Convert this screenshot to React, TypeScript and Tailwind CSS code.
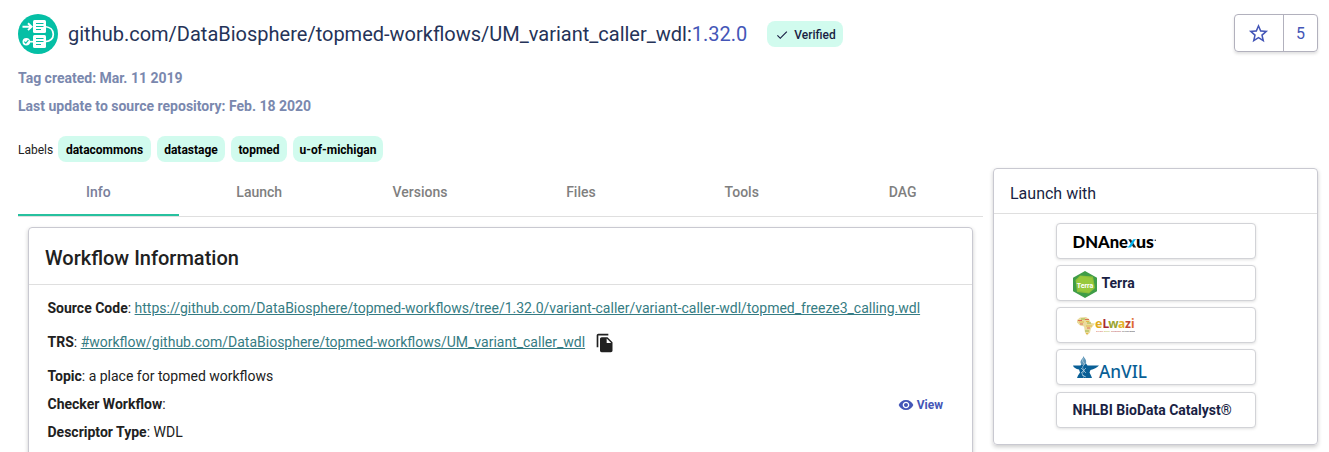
import type { ReactNode } from 'react';
import { MdCheck, MdFileCopy, MdRemoveRedEye, MdStarBorder } from 'react-icons/md';

const labels = [
  { name: 'datacommons', width: 'w-[93px]' },
  { name: 'datastage', width: 'w-[68px]' },
  { name: 'topmed', width: 'w-14' },
  { name: 'u-of-michigan', width: 'w-[90px]' },
];
const tabs = ['Info', 'Launch', 'Versions', 'Files', 'Tools', 'DAG'];

function WorkflowLogo() {
  return (
    <svg className="size-10 shrink-0" viewBox="0 0 40 40" fill="none">
      <circle cx="20" cy="20" r="20" fill="#05bfa5" />
      <path d="M27 12.500C32 13 35.300 16 35.300 20.300S32 27.300 27 27.700" stroke="#fff" strokeWidth="1.700" />
      <path d="M4.500 12.700H13.500M10 9.300 13.600 12.700 10 16.100" stroke="#fff" strokeWidth="1.900" />
      <rect x="15" y="6" width="13" height="13" rx="1.500" fill="#fff" />
      <rect x="15" y="21" width="13" height="13" rx="1.500" fill="#fff" />
      <path d="M18 9.500h7.500M18 12.500h7.500M18 15.500h5M18 24.500h7.500M18 27.500h7.500M18 30.500h5" stroke="#05bfa5" strokeWidth="1.100" />
      <path d="M11 27.700h4" stroke="#fff" strokeWidth="1.700" />
      <circle cx="8.300" cy="27.700" r="3.800" fill="#fff" />
      <path d="m6.300 27.700 1.500 1.500 2.600-3" stroke="#05bfa5" strokeWidth="1.100" />
    </svg>
  );
}

function DnaNexusLogo() {
  return (
    <svg className="mt-0.5 h-5 w-[90px]" viewBox="0 0 90 20">
      <g fontFamily="Lato, sans-serif" fontWeight="900" fontSize="16">
        <text x="-0.500" y="15.500" textLength="55.500" lengthAdjust="spacingAndGlyphs">DNAne</text>
        <text x="63" y="15.500" textLength="18" lengthAdjust="spacingAndGlyphs">us</text>
      </g>
      <path d="M55.200 7.300h2.700l5.300 8.200h-2.800z" fill="#222" />
      <path d="M63.300 7.300h-2.700c-2.500 1.500-3.200 6.500-6.300 8.200h3.200c2.500-1.500 3-6.500 5.800-8.200z" fill="#00b5f0" />
      <circle cx="82.300" cy="8.200" r="0.800" fill="#333" />
    </svg>
  );
}

function TerraLogo() {
  return (
    <svg className="h-[27px] w-6" viewBox="0 0 24 27">
      <path d="M12 0 24 6.700v13.500L12 27 0 20.200V6.700z" fill="#3f9d48" />
      <path d="m7 4.500 13 1 2 11.500-6 5.500-12-1.500L2.500 9z" fill="#8bbd3b" />
      <path d="m7.500 5 11.500 2 2 8.500-5 6-11-2-2-9z" fill="#97c93c" />
      <text x="3.800" y="16.500" fontFamily="Roboto, sans-serif" fontSize="8" fill="#fff" textLength="16.500" lengthAdjust="spacingAndGlyphs">Terra</text>
    </svg>
  );
}

function ElwaziLogo() {
  return (
    <svg className="mt-0.5 h-5 w-[60px]" viewBox="0 0 60 20">
      <path d="M0 4 3 1.500 9 1l3 2 2 4 4 .500-4 5-1 4-3 3-2-3-1-6-4-1-3-3z" fill="#eadb9e" />
      <path d="M1 4.500h4M8 3.500h4M3 8h3M10 12h3" stroke="#dd6f55" strokeWidth="1" />
      <path d="M4 3h4M10 7h4M8 15h4" stroke="#9eb84b" strokeWidth="1" />
      <path d="M2 6h5M9 10h6M9 5.500h3M9 17.500h2" stroke="#e5b848" strokeWidth="1" />
      <g fontFamily="'Noto Sans', sans-serif" fontWeight="700" fontSize="12">
        <text x="18" y="12" fill="#e1aa19" textLength="7.500" lengthAdjust="spacingAndGlyphs">e</text>
        <text x="25.500" y="12" fill="#a92b32">L</text>
        <text x="31.300" y="12" fill="#9aa431">w</text>
        <text x="41" y="12" fill="#e4b429">a</text>
        <text x="48" y="12" fill="#bf4931">z</text>
        <text x="54" y="12" fill="#e06b30">i</text>
      </g>
      <g fontFamily="Roboto, sans-serif" fontSize="2.500" fontWeight="500" opacity=".9">
        <text x="19" y="15.500" fill="#d45f4a" textLength="7">OPEN</text>
        <text x="27" y="15.500" fill="#b4bd4b" textLength="6">DATA</text>
        <text x="34" y="15.500" fill="#b64c48" textLength="10">SCIENCE</text>
        <text x="45" y="15.500" fill="#353535" textLength="13">PLATFORM</text>
      </g>
    </svg>
  );
}

function AnvilLogo() {
  return (
    <svg className="mt-1.5 h-7 w-[76px]" viewBox="0 0 76 28">
      <path d="M0 9.500h7.500L9 7.500h4l1.500 2H26c-2 2.300-5 3.500-8.500 4.500l-1 2.500 1.500 3 1 2.500H4l1-2.500 2-3-1-3C3 13 .500 11.500 0 9.500z" fill="#095f96" />
      <path d="M10.500 0c.500 2 3 3.500 2.700 6-.200 2-1.200 3-2.700 3.500C8.500 9 7.200 7.500 7.500 5.500 8 3 10.300 2.300 10.500 0z" fill="#5f96b8" />
      <path d="M10.500 2.500c-3 4 3 4 0 7s3 5-.500 7 3 3 .500 5M8 12l5 5M13 12l-5 5M9 19l4 2" fill="none" stroke="#d8e9f2" strokeWidth=".600" />
      <text x="26" y="21.700" fontFamily="'Noto Sans', sans-serif" fontWeight="500" fontSize="17.500" fill="#095f96" textLength="48" lengthAdjust="spacingAndGlyphs">AnVIL</text>
    </svg>
  );
}

function Chip({ width, children }: { width: string; children: ReactNode }) {
  return (
    <span
      className={`${width} flex h-[26px] items-center justify-center rounded-lg bg-[#d1fbee] pt-0.5 text-xs font-bold whitespace-nowrap text-black`}
    >
      {children}
    </span>
  );
}

function LaunchButton({ children }: { children: ReactNode }) {
  return (
    <button className="flex h-9 w-[200px] items-center rounded border border-[#d2d3d7] bg-white pl-4 text-sm font-bold text-[#1a1f44] shadow-[0_1px_3px_rgba(0,0,0,0.12)]">
      {children}
    </button>
  );
}

export default function App() {
  return (
    <div className="h-[452px] w-[1329px] overflow-hidden bg-white pr-[11px] pl-[18px] font-[Roboto,sans-serif] text-sm text-[#212121]">
      <header className="flex h-[54px] items-start justify-between pt-3.5">
        <div className="flex items-center">
          <WorkflowLogo />
          <h1 className="ml-2.5 text-[20px] leading-10 whitespace-nowrap text-[#253358]">
            github.com/DataBiosphere/topmed-workflows/UM_variant_caller_wdl:
            <span className="text-[#4456b7]">1.32.0</span>
          </h1>
          <span className="ml-5 flex h-[26px] w-[76px] items-center rounded-lg bg-[#d1fbee] pt-0.5 pl-2 text-xs font-medium text-[#1a1f44]">
            <MdCheck className="mr-[5px] size-3.5" />
            Verified
          </span>
        </div>
        <div className="flex h-[38px] w-[84px] rounded border border-[#b2b1bd] text-base text-[#4456b7] shadow-[0_2px_3px_rgba(0,0,0,0.12)]">
          <span className="flex w-[49px] items-center justify-center border-r border-[#b2b1bd] pr-px">
            <MdStarBorder className="size-[23px]" />
          </span>
          <span className="flex flex-1 items-center justify-center pt-0.5">5</span>
        </div>
      </header>

      <div className="pt-2.5 text-sm leading-7 font-bold text-[#7a88ae]">
        <p>Tag created: Mar. 11 2019</p>
        <p>Last update to source repository: Feb. 18 2020</p>
      </div>

      <div className="mt-4 flex h-[26px] items-center gap-1.5 text-xs">
        <span className="-mr-px w-[35px] pt-0.5">Labels</span>
        {labels.map((label) => (
          <Chip key={label.name} width={label.width}>
            {label.name}
          </Chip>
        ))}
      </div>

      <div className="mt-1.5 flex items-start gap-2.5">
        <main className="w-[965px] shrink-0">
          <nav className="grid h-[49px] grid-cols-6 border-b border-[#dfdfdf]">
            {tabs.map((tab, index) => (
              <div
                key={tab}
                className={
                  index === 0
                    ? 'flex h-12 items-center justify-center border-b-2 border-[#27c19f] pt-0.5 font-medium text-[#7a7f9b]'
                    : 'flex h-12 items-center justify-center border-b-2 border-transparent pt-0.5 font-medium text-[#7f7f7f]'
                }
              >
                {tab}
              </div>
            ))}
          </nav>
          <section className="mx-2.5 mt-2.5 h-[300px] rounded border border-[#c9c9d1] shadow-[0_2px_4px_rgba(0,0,0,0.2)]">
            <h2 className="flex h-[57px] items-center border-b border-[#dfdfdf] pt-1 pl-4 text-[20px] font-medium">
              Workflow Information
            </h2>
            <div className="pt-1.5 pr-[29px] pl-[18.5px]">
              <p className="h-[34px] leading-[34px]">
                <strong>Source Code</strong>:{' '}
                <a className="text-[#367c83] underline">
                  https://github.com/DataBiosphere/topmed-workflows/tree/1.32.0/variant-caller/variant-caller-wdl/topmed_freeze3_calling.wdl
                </a>
              </p>
              <p className="flex h-[34px] items-center">
                <span>
                  <strong>TRS</strong>:{' '}
                  <a className="text-[#367c83] underline">
                    #workflow/github.com/DataBiosphere/topmed-workflows/UM_variant_caller_wdl
                  </a>
                </span>
                <MdFileCopy className="mt-0.5 ml-2.5 size-5" />
              </p>
              <p className="h-[31px] leading-[34px]">
                <strong>Topic</strong>: a place for topmed workflows
              </p>
              <div className="flex h-7 items-center justify-between">
                <p>
                  <strong>Checker Workflow</strong>:
                </p>
                <button className="flex items-center gap-[3px] pt-0.5 text-xs font-bold text-[#4456b7]">
                  <MdRemoveRedEye className="size-4" />
                  View
                </button>
              </div>
              <p className="h-7 leading-7">
                <strong>Descriptor Type</strong>: WDL
              </p>
            </div>
          </section>
        </main>

        <aside className="h-[277px] w-[325px] rounded border border-[#c9c9d1] shadow-[0_2px_4px_rgba(0,0,0,0.2)]">
          <h2 className="flex h-[45px] items-center border-b border-[#dfdfdf] pt-1.5 pl-4 text-base text-[#1a1f44]">
            Launch with
          </h2>
          <div className="flex flex-col items-center gap-1.5 pt-[9px]">
            <LaunchButton>
              <DnaNexusLogo />
            </LaunchButton>
            <LaunchButton>
              <span className="flex items-center gap-[5px]">
                <span className="pt-[3px]">
                  <TerraLogo />
                </span>
                Terra
              </span>
            </LaunchButton>
            <LaunchButton>
              <span className="pl-1">
                <ElwaziLogo />
              </span>
            </LaunchButton>
            <LaunchButton>
              <AnvilLogo />
            </LaunchButton>
            <div className="pt-px">
              <LaunchButton>NHLBI BioData Catalyst®</LaunchButton>
            </div>
          </div>
        </aside>
      </div>
    </div>
  );
}
